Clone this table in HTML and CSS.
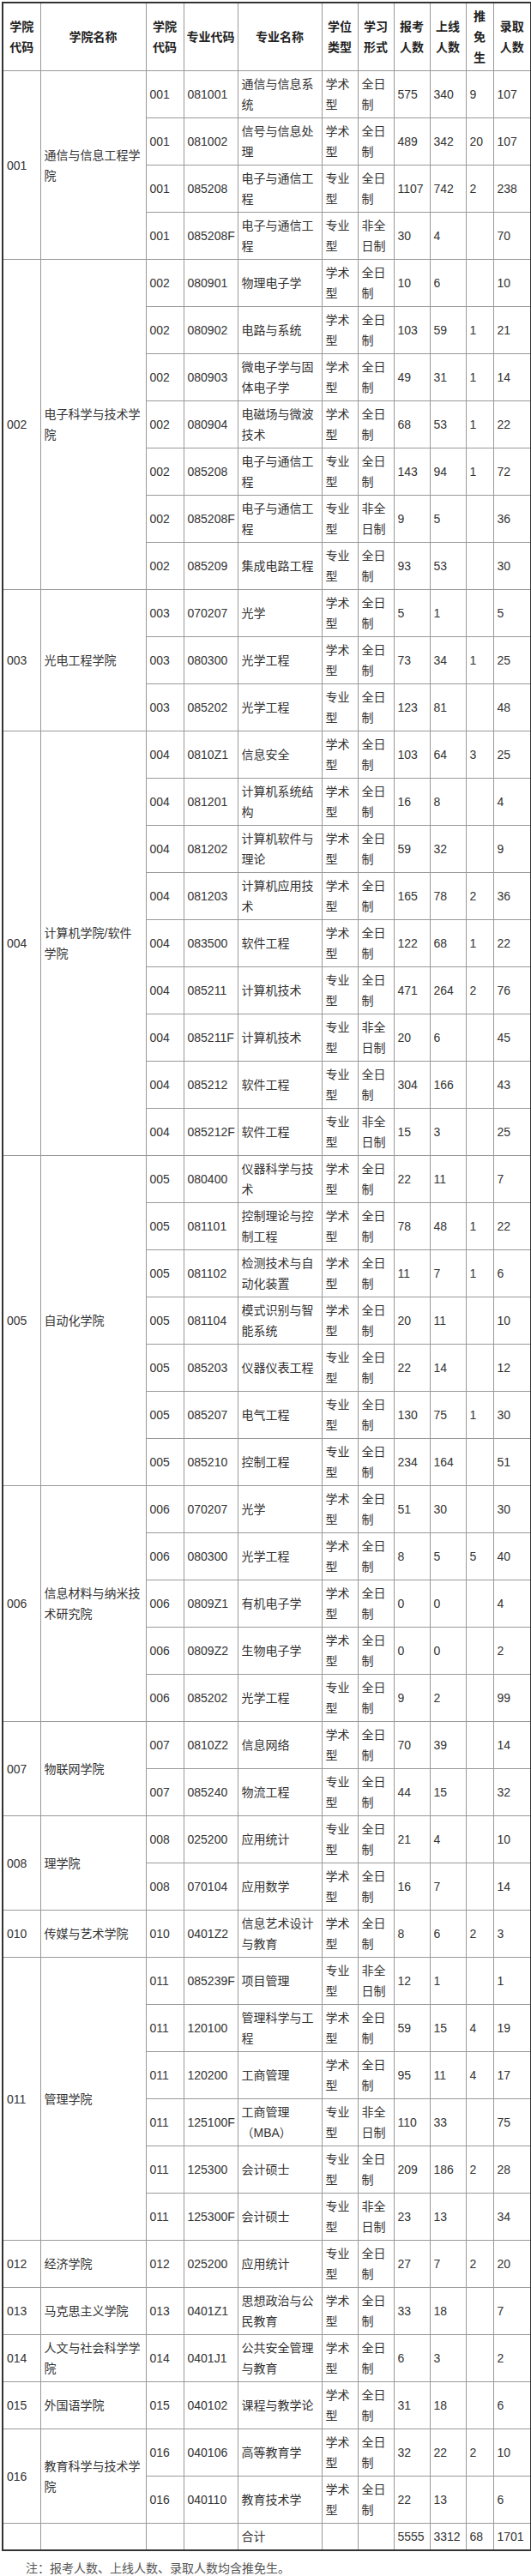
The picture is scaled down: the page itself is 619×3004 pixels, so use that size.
FILE: index.html
```html
<!DOCTYPE html>
<html lang="zh-CN">
<head>
<meta charset="utf-8">
<title>招生数据</title>
<link rel="stylesheet" href="styles.css">
</head>
<body>
<div class="wrap">
<table class="data">
<colgroup>
<col class="c1"><col class="c2"><col class="c3"><col class="c4"><col class="c5"><col class="c6"><col class="c7"><col class="c8"><col class="c9"><col class="c10"><col class="c11">
</colgroup>
<thead>
<tr><th>学院代码</th><th>学院名称</th><th>学院代码</th><th>专业代码</th><th>专业名称</th><th>学位类型</th><th>学习形式</th><th>报考人数</th><th>上线人数</th><th>推免生</th><th>录取人数</th></tr>
</thead>
<tbody>
<tr><td rowspan="4">001</td><td rowspan="4">通信与信息工程学院</td><td>001</td><td>081001</td><td>通信与信息系统</td><td>学术型</td><td>全日制</td><td>575</td><td>340</td><td>9</td><td>107</td></tr>
<tr><td>001</td><td>081002</td><td>信号与信息处理</td><td>学术型</td><td>全日制</td><td>489</td><td>342</td><td>20</td><td>107</td></tr>
<tr><td>001</td><td>085208</td><td>电子与通信工程</td><td>专业型</td><td>全日制</td><td>1107</td><td>742</td><td>2</td><td>238</td></tr>
<tr><td>001</td><td>085208F</td><td>电子与通信工程</td><td>专业型</td><td>非全日制</td><td>30</td><td>4</td><td></td><td>70</td></tr>

<tr><td rowspan="7">002</td><td rowspan="7">电子科学与技术学院</td><td>002</td><td>080901</td><td>物理电子学</td><td>学术型</td><td>全日制</td><td>10</td><td>6</td><td></td><td>10</td></tr>
<tr><td>002</td><td>080902</td><td>电路与系统</td><td>学术型</td><td>全日制</td><td>103</td><td>59</td><td>1</td><td>21</td></tr>
<tr><td>002</td><td>080903</td><td>微电子学与固体电子学</td><td>学术型</td><td>全日制</td><td>49</td><td>31</td><td>1</td><td>14</td></tr>
<tr><td>002</td><td>080904</td><td>电磁场与微波技术</td><td>学术型</td><td>全日制</td><td>68</td><td>53</td><td>1</td><td>22</td></tr>
<tr><td>002</td><td>085208</td><td>电子与通信工程</td><td>专业型</td><td>全日制</td><td>143</td><td>94</td><td>1</td><td>72</td></tr>
<tr><td>002</td><td>085208F</td><td>电子与通信工程</td><td>专业型</td><td>非全日制</td><td>9</td><td>5</td><td></td><td>36</td></tr>
<tr><td>002</td><td>085209</td><td>集成电路工程</td><td>专业型</td><td>全日制</td><td>93</td><td>53</td><td></td><td>30</td></tr>

<tr><td rowspan="3">003</td><td rowspan="3">光电工程学院</td><td>003</td><td>070207</td><td>光学</td><td>学术型</td><td>全日制</td><td>5</td><td>1</td><td></td><td>5</td></tr>
<tr><td>003</td><td>080300</td><td>光学工程</td><td>学术型</td><td>全日制</td><td>73</td><td>34</td><td>1</td><td>25</td></tr>
<tr><td>003</td><td>085202</td><td>光学工程</td><td>专业型</td><td>全日制</td><td>123</td><td>81</td><td></td><td>48</td></tr>

<tr><td rowspan="9">004</td><td rowspan="9">计算机学院/软件学院</td><td>004</td><td>0810Z1</td><td>信息安全</td><td>学术型</td><td>全日制</td><td>103</td><td>64</td><td>3</td><td>25</td></tr>
<tr><td>004</td><td>081201</td><td>计算机系统结构</td><td>学术型</td><td>全日制</td><td>16</td><td>8</td><td></td><td>4</td></tr>
<tr><td>004</td><td>081202</td><td>计算机软件与理论</td><td>学术型</td><td>全日制</td><td>59</td><td>32</td><td></td><td>9</td></tr>
<tr><td>004</td><td>081203</td><td>计算机应用技术</td><td>学术型</td><td>全日制</td><td>165</td><td>78</td><td>2</td><td>36</td></tr>
<tr><td>004</td><td>083500</td><td>软件工程</td><td>学术型</td><td>全日制</td><td>122</td><td>68</td><td>1</td><td>22</td></tr>
<tr><td>004</td><td>085211</td><td>计算机技术</td><td>专业型</td><td>全日制</td><td>471</td><td>264</td><td>2</td><td>76</td></tr>
<tr><td>004</td><td>085211F</td><td>计算机技术</td><td>专业型</td><td>非全日制</td><td>20</td><td>6</td><td></td><td>45</td></tr>
<tr><td>004</td><td>085212</td><td>软件工程</td><td>专业型</td><td>全日制</td><td>304</td><td>166</td><td></td><td>43</td></tr>
<tr><td>004</td><td>085212F</td><td>软件工程</td><td>专业型</td><td>非全日制</td><td>15</td><td>3</td><td></td><td>25</td></tr>

<tr><td rowspan="7">005</td><td rowspan="7">自动化学院</td><td>005</td><td>080400</td><td>仪器科学与技术</td><td>学术型</td><td>全日制</td><td>22</td><td>11</td><td></td><td>7</td></tr>
<tr><td>005</td><td>081101</td><td>控制理论与控制工程</td><td>学术型</td><td>全日制</td><td>78</td><td>48</td><td>1</td><td>22</td></tr>
<tr><td>005</td><td>081102</td><td>检测技术与自动化装置</td><td>学术型</td><td>全日制</td><td>11</td><td>7</td><td>1</td><td>6</td></tr>
<tr><td>005</td><td>081104</td><td>模式识别与智能系统</td><td>学术型</td><td>全日制</td><td>20</td><td>11</td><td></td><td>10</td></tr>
<tr><td>005</td><td>085203</td><td>仪器仪表工程</td><td>专业型</td><td>全日制</td><td>22</td><td>14</td><td></td><td>12</td></tr>
<tr><td>005</td><td>085207</td><td>电气工程</td><td>专业型</td><td>全日制</td><td>130</td><td>75</td><td>1</td><td>30</td></tr>
<tr><td>005</td><td>085210</td><td>控制工程</td><td>专业型</td><td>全日制</td><td>234</td><td>164</td><td></td><td>51</td></tr>

<tr><td rowspan="5">006</td><td rowspan="5">信息材料与纳米技术研究院</td><td>006</td><td>070207</td><td>光学</td><td>学术型</td><td>全日制</td><td>51</td><td>30</td><td></td><td>30</td></tr>
<tr><td>006</td><td>080300</td><td>光学工程</td><td>学术型</td><td>全日制</td><td>8</td><td>5</td><td>5</td><td>40</td></tr>
<tr><td>006</td><td>0809Z1</td><td>有机电子学</td><td>学术型</td><td>全日制</td><td>0</td><td>0</td><td></td><td>4</td></tr>
<tr><td>006</td><td>0809Z2</td><td>生物电子学</td><td>学术型</td><td>全日制</td><td>0</td><td>0</td><td></td><td>2</td></tr>
<tr><td>006</td><td>085202</td><td>光学工程</td><td>专业型</td><td>全日制</td><td>9</td><td>2</td><td></td><td>99</td></tr>

<tr><td rowspan="2">007</td><td rowspan="2">物联网学院</td><td>007</td><td>0810Z2</td><td>信息网络</td><td>学术型</td><td>全日制</td><td>70</td><td>39</td><td></td><td>14</td></tr>
<tr><td>007</td><td>085240</td><td>物流工程</td><td>专业型</td><td>全日制</td><td>44</td><td>15</td><td></td><td>32</td></tr>

<tr><td rowspan="2">008</td><td rowspan="2">理学院</td><td>008</td><td>025200</td><td>应用统计</td><td>专业型</td><td>全日制</td><td>21</td><td>4</td><td></td><td>10</td></tr>
<tr><td>008</td><td>070104</td><td>应用数学</td><td>学术型</td><td>全日制</td><td>16</td><td>7</td><td></td><td>14</td></tr>

<tr><td>010</td><td>传媒与艺术学院</td><td>010</td><td>0401Z2</td><td>信息艺术设计与教育</td><td>学术型</td><td>全日制</td><td>8</td><td>6</td><td>2</td><td>3</td></tr>

<tr><td rowspan="6">011</td><td rowspan="6">管理学院</td><td>011</td><td>085239F</td><td>项目管理</td><td>专业型</td><td>非全日制</td><td>12</td><td>1</td><td></td><td>1</td></tr>
<tr><td>011</td><td>120100</td><td>管理科学与工程</td><td>学术型</td><td>全日制</td><td>59</td><td>15</td><td>4</td><td>19</td></tr>
<tr><td>011</td><td>120200</td><td>工商管理</td><td>学术型</td><td>全日制</td><td>95</td><td>11</td><td>4</td><td>17</td></tr>
<tr><td>011</td><td>125100F</td><td>工商管理（MBA）</td><td>专业型</td><td>非全日制</td><td>110</td><td>33</td><td></td><td>75</td></tr>
<tr><td>011</td><td>125300</td><td>会计硕士</td><td>专业型</td><td>全日制</td><td>209</td><td>186</td><td>2</td><td>28</td></tr>
<tr><td>011</td><td>125300F</td><td>会计硕士</td><td>专业型</td><td>非全日制</td><td>23</td><td>13</td><td></td><td>34</td></tr>

<tr><td>012</td><td>经济学院</td><td>012</td><td>025200</td><td>应用统计</td><td>专业型</td><td>全日制</td><td>27</td><td>7</td><td>2</td><td>20</td></tr>
<tr><td>013</td><td>马克思主义学院</td><td>013</td><td>0401Z1</td><td>思想政治与公民教育</td><td>学术型</td><td>全日制</td><td>33</td><td>18</td><td></td><td>7</td></tr>
<tr><td>014</td><td>人文与社会科学学院</td><td>014</td><td>0401J1</td><td>公共安全管理与教育</td><td>学术型</td><td>全日制</td><td>6</td><td>3</td><td></td><td>2</td></tr>
<tr><td>015</td><td>外国语学院</td><td>015</td><td>040102</td><td>课程与教学论</td><td>学术型</td><td>全日制</td><td>31</td><td>18</td><td></td><td>6</td></tr>

<tr><td rowspan="2">016</td><td rowspan="2">教育科学与技术学院</td><td>016</td><td>040106</td><td>高等教育学</td><td>学术型</td><td>全日制</td><td>32</td><td>22</td><td>2</td><td>10</td></tr>
<tr><td>016</td><td>040110</td><td>教育技术学</td><td>学术型</td><td>全日制</td><td>22</td><td>13</td><td></td><td>6</td></tr>

<tr><td></td><td></td><td></td><td></td><td>合计</td><td></td><td></td><td>5555</td><td>3312</td><td>68</td><td>1701</td></tr>
</tbody>
</table>
<p class="note">注：报考人数、上线人数、录取人数均含推免生。</p>
</div>
</body>
</html>
```
FILE: styles.css
```css
html, body {
  margin: 0;
  padding: 0;
  background: #fff;
}
body {
  font-family: "Liberation Sans", "Noto Sans CJK SC", sans-serif;
  font-size: 14px;
  line-height: 24px;
  color: #333;
}
.wrap {
  padding: 2px 1px 0 2px;
}
.data {
  border-collapse: collapse;
  table-layout: fixed;
  width: 616px;
  border: 2px solid #333;
}
.c1 { width: 44px; }
.c2 { width: 123px; }
.c3 { width: 44px; }
.c4 { width: 63px; }
.c5 { width: 98px; }
.c6 { width: 42px; }
.c7 { width: 42px; }
.c8 { width: 42px; }
.c9 { width: 42px; }
.c10 { width: 32px; }
.c11 { width: 44px; }
.data td,
.data th {
  border: 1px solid #999;
  padding: 3px 4px;
  vertical-align: middle;
  text-align: left;
  font-weight: normal;
}
.data th {
  padding: 3px 2px;
  text-align: center;
  font-weight: bold;
  color: #222;
}
.note {
  margin: 8px 0 0;
  text-indent: 28px;
  color: #555;
}
```
